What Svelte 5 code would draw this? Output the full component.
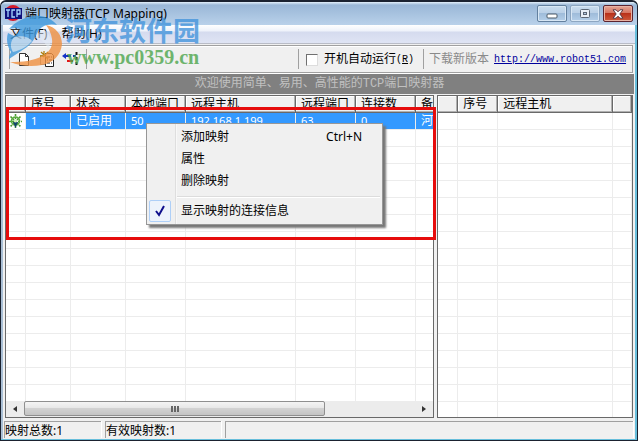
<script>
  const mappings = [
    { id: '1', state: '已启用', local: '50', host: '192.168.1.199', remote: '63', links: '0', note: '河' }
  ];
  const filler = Array.from({ length: 16 });
  const columns = ['序号', '状态', '本地端口', '远程主机', '远程端口', '连接数', '备注'];
</script>

<div class="window">
  <header class="title">
    <svg class="appicon" width="17" height="17" viewBox="0 0 17 17" aria-hidden="true">
      <circle cx="8" cy="8" r="8" fill="#d51b2c" />
      <rect x="0" y="3" width="17" height="11" fill="#10107c" />
      <path d="M1 5h4M3 5v7M10 5H7v7h3M12 12V5h3v4h-3" fill="none" stroke="#a8d8ff" stroke-width="1.3" />
    </svg>
    <h1>端口映射器(TCP Mapping)</h1>
    <div class="controls">
      <button aria-label="最小化"><svg width="12" height="10" viewBox="0 0 12 10"><rect x="1" y="5" width="10" height="4" rx="1" fill="#fff" stroke="#4b5867" /></svg></button>
      <button class="max" aria-label="最大化"><svg width="12" height="10" viewBox="0 0 12 10"><rect x="1.5" y=".5" width="9" height="8" rx="1" fill="#e8eff7" stroke="#5b6675" /><rect x="4.5" y="3.5" width="3" height="2" fill="#b5cce5" stroke="#5b6675" /></svg></button>
      <button class="close" aria-label="关闭"><svg width="14" height="10" viewBox="0 0 14 10"><path d="M2 .8h3l2 2 2-2h3L8.8 5l3.2 4.2H9l-2-2-2 2H2L5.2 5z" fill="#fff" stroke="#5a3a44" /></svg></button>
    </div>
  </header>

  <nav class="menubar">
    <button>文件(F)</button>
    <button>帮助(H)</button>
  </nav>

  <div class="toolbar">
    <div class="tools">
      <button aria-label="新建"><svg width="16" height="16" viewBox="0 0 16 16"><path d="M3.5 2.5h6l3 3v9h-9z" fill="#fff" stroke="#333" /><path d="M9.5 2.5v3h3" fill="none" stroke="#333" /></svg></button>
      <button aria-label="属性"><svg width="16" height="16" viewBox="0 0 16 16"><path d="M1.5 4.5h7v9h-7z" fill="#fff" stroke="#999" /><path d="M6.5 2.5h6l2 2v11h-8z" fill="#fff" stroke="#222" /><path d="M8 6h3m1 0h1M8 9h1m1 0h3M8 12h3m1 0h1" stroke="#222" /><path d="M2 1l7 7M9 1L4 6M5 0v3M1 5h3" stroke="#b08012" stroke-width="1.3" /></svg></button>
      <button aria-label="映射"><svg width="17" height="16" viewBox="0 0 17 16"><path d="M3 5h6M11 5h3" stroke="#1432c8" stroke-width="2" /><path d="M4 2L0 5l4 3z" fill="#1432c8" /><path d="M5 10h6" stroke="#e01717" stroke-width="2" /><path d="M14.5 1v14" stroke="#111" stroke-width="2" stroke-dasharray="3 2" /></svg></button>
    </div>
    <label class="auto"><input type="checkbox" />开机自动运行<span class="key">(<u>R</u>)</span></label>
    <div class="download"><span>下载新版本</span><a href="http://www.robot51.com">http://www.robot51.com</a></div>
  </div>

  <div class="banner">欢迎使用简单、易用、高性能的TCP端口映射器</div>

  <main>
    <section class="panel left">
      <div class="view">
        <table>
          <colgroup><col class="w20" /><col class="w45" /><col class="w55" /><col class="w60" /><col class="w110" /><col class="w60" /><col class="w60" /><col class="w60" /></colgroup>
          <thead><tr><th></th>{#each columns as c}<th>{c}</th>{/each}</tr></thead>
          <tbody>
            {#each mappings as m}
              <tr class="selected">
                <td class="status"><svg width="15" height="15" viewBox="0 0 15 15" aria-hidden="true"><path d="M7.5 0v15M1 7.5h13M2.5 2.5l10 10M12.5 2.5l-10 10" stroke="#4c9a35" stroke-width="1.6" stroke-dasharray="2 1" /><circle cx="7.5" cy="7" r="4" fill="none" stroke="#58ac3e" stroke-width="1.6" /><path d="M5 8h5l-2.500 6z" fill="#12456a" /><circle cx="7.5" cy="7" r="1.5" fill="#d6efbd" /></svg></td>
                <td>{m.id}</td><td class="song">{m.state}</td><td>{m.local}</td><td>{m.host}</td><td>{m.remote}</td><td>{m.links}</td><td class="song">{m.note}</td>
              </tr>
            {/each}
            {#each filler as _}
              <tr><td></td><td></td><td></td><td></td><td></td><td></td><td></td><td></td></tr>
            {/each}
          </tbody>
        </table>
      </div>
      <div class="scroll">
        <button aria-label="向左滚动"><svg width="4" height="6" viewBox="0 0 4 6"><path d="M4 0v6L0 3z" fill="#333" /></svg></button>
        <div class="track"><div class="thumb"><i></i><i></i><i></i></div></div>
        <button aria-label="向右滚动"><svg width="4" height="6" viewBox="0 0 4 6"><path d="M0 0v6l4-3z" fill="#333" /></svg></button>
      </div>
      <div class="frame"></div>
    </section>
    <section class="panel right">
      <div class="view">
        <table class="fluid">
          <colgroup><col class="w20" /><col class="w40" /><col class="w115" /><col /></colgroup>
          <thead><tr><th></th><th>序号</th><th>远程主机</th><th></th></tr></thead>
          <tbody>
            <tr><td></td><td></td><td></td><td></td></tr>
            {#each filler as _}
              <tr><td></td><td></td><td></td><td></td></tr>
            {/each}
            <tr><td></td><td></td><td></td><td></td></tr>
          </tbody>
        </table>
      </div>
    </section>
  </main>

  <footer>
    <span class="total">映射总数:1</span>
    <span class="active">有效映射数:1</span>
    <span class="rest"></span>
  </footer>

  <div class="context" role="menu">
    <button role="menuitem"><span></span>添加映射<kbd>Ctrl+N</kbd></button>
    <button role="menuitem"><span></span>属性</button>
    <button role="menuitem"><span></span>删除映射</button>
    <hr />
    <button role="menuitemcheckbox" aria-checked="true"><span class="check"><svg width="10" height="12" viewBox="0 0 10 12"><path d="M1 6l3 4L9 1" fill="none" stroke="#10108c" stroke-width="2" /></svg></span>显示映射的连接信息</button>
  </div>

  <div class="watermark">
    <svg width="56" height="52" viewBox="0 0 56 52" aria-hidden="true">
      <path d="M3 14C10 6 19 2 29 1c9-1 17 3 22 9-7-2-14 0-18 5-4 6-5 12-12 17L3 44c0-3 1-5 2-7C1 31 0 24 2 18l6 3c3-2 5-4 6-7-4-1-7-1-11 0z" fill="#3d98dc" />
      <path d="M40 10c10 2 16 10 16 19-1 11-9 19-20 21-11 2-22 1-32-3 12 0 24-1 32-6 8-4 11-10 10-17-1-6-3-10-6-14z" fill="#ef9040" />
      <path d="M8 22c8-2 15 0 18 4-5 6-11 9-19 11-3-5-3-10 1-15z" fill="#dfe9f2" fill-opacity=".7" />
      <path d="M29 23c3-6 7-8 11-7 5 5 6 12 2 18-2-6-6-10-13-11z" fill="#e4edf5" fill-opacity=".7" />
    </svg>
    <div class="brand"><strong>河东软件园</strong><b>www.pc0359.cn</b></div>
  </div>
</div>

<style>
  :global(body) { margin: 0; }
  .window {
    position: relative; box-sizing: border-box; min-height: 100vh; display: flex; flex-direction: column;
    padding: 0 4px 2px; background: #f0f0f0; border: solid #1b2230; border-width: 2px 1px 1px;
    border-radius: 6px 6px 0 0; box-shadow: inset -2px -1px #67bedb, inset 2px 0 #a9bfd5;
    font: 12px/16px "Noto Sans", "Noto Sans CJK SC", sans-serif; color: #000; overflow: hidden;
  }
  button { font: inherit; color: inherit; border: 0; padding: 0; background: none; display: flex; align-items: center; justify-content: center; }
  .title { height: 23px; flex: none; margin: 0 -4px; padding: 0 4px; display: flex; background: linear-gradient(#e4f0fb, #9ab7d7 3px, #b9d1ea); border-radius: 5px 5px 0 0; }
  .appicon { margin-top: 3px; }
  h1 { flex: 1; margin: 3px 0 0 3px; font-size: 12px; font-weight: 400; line-height: 18px; }
  .controls { display: flex; gap: 3px; margin-top: 3px; }
  .controls button { box-sizing: border-box; width: 30px; height: 17px; border: 1px solid #63809f; border-radius: 2px; background: linear-gradient(#c9dcef, #b9cfe6 50%, #9fbcda 50%, #b4cfe9); box-shadow: inset 0 0 0 1px #d8e7f5; }
  .controls .max { border-color: #8da6c1; }
  .controls .close { border-color: #5c2430; background: linear-gradient(#e6a596, #d4705c 50%, #b9311a 50%, #cf5a3c); box-shadow: inset 0 0 0 1px #e9b3a5; }
  .menubar { height: 18px; flex: none; margin: 0 -2px; display: flex; gap: 14px; padding-left: 7px; background: linear-gradient(#fff, #eef2fa 6px, #d5dbee 7px, #dfe4f4); border-bottom: 1px solid #b9bcc6; }
  .toolbar { box-sizing: border-box; height: 28px; flex: none; margin-top: 1px; display: flex; align-items: center; border: 1px solid #a0a0a0; border-width: 1px 1px 1px 0; box-shadow: inset 0 1px #fff, 0 1px #fff; font-family: "Liberation Mono", "Noto Sans CJK SC", monospace; }
  .tools { flex: 1; height: 20px; display: flex; align-items: center; gap: 7px; margin-left: 4px; padding-left: 6px; border-left: 1px solid #a0a0a0; }
  .tools::after { content: ""; height: 20px; border-left: 1px solid #a0a0a0; }
  .auto, .download { box-sizing: border-box; height: 20px; display: flex; align-items: center; border-left: 1px solid #a0a0a0; white-space: nowrap; }
  .auto { width: 125px; padding: 2px 0 0 7px; }
  .auto input { appearance: none; box-sizing: border-box; width: 12px; height: 12px; margin: 0 6px 0 0; background: #fff; border: 1px solid; border-color: #707070 #ddd #ddd #707070; }
  .key { font-size: 10px; }
  .download { width: 209px; gap: 5px; padding: 2px 0 0 5px; color: #8a8a8a; }
  .download a { color: #00009c; font-size: 10px; }
  .banner { height: 20px; flex: none; margin: 1px -1px 0 0; background: #808080; color: #c0c0c0; line-height: 20px; text-align: center; font-family: "Liberation Mono", "Noto Sans CJK SC", monospace; }
  main { flex: 1; display: flex; gap: 3px; min-height: 0; margin-top: 1px; }
  .panel { position: relative; box-sizing: border-box; min-width: 0; display: flex; flex-direction: column; border: 1px solid #696969; background: #fff; }
  .left { flex: 430 1 0; }
  .right { flex: 195 1 0; }
  .view { flex: 1 1 0; min-height: 240px; overflow: hidden; }
  table { table-layout: fixed; width: 470px; border-collapse: separate; border-spacing: 0; }
  .fluid { width: 100%; }
  .w20 { width: 20px; } .w40 { width: 40px; } .w45 { width: 45px; } .w55 { width: 55px; } .w60 { width: 60px; } .w110 { width: 110px; } .w115 { width: 115px; }
  th, td { box-sizing: border-box; height: 17px; padding: 0 0 0 5px; line-height: 16px; font-weight: 400; text-align: left; white-space: nowrap; overflow: hidden; }
  th { background: #f0f0f0; border-right: 1px solid #696969; border-bottom: 1px solid #696969; box-shadow: inset -1px -1px #b0b0b0, inset 1px 1px #fff; }
  td { border-right: 1px solid #ececec; border-bottom: 1px solid #ececec; }
  .selected td { background: #3399ff; color: #fff; font-size: 11px; }
  .selected .song { font-size: 12px; }
  .selected .status { background: #fff; padding: 0 0 0 2px; }
  .status svg { display: block; }
  .scroll { height: 16px; flex: none; display: flex; background: #ececec; }
  .scroll button { width: 18px; }
  .track { flex: 1; display: flex; }
  .thumb { box-sizing: border-box; width: 77%; height: 15px; display: flex; align-items: center; justify-content: center; gap: 1px; border: 1px solid #8f8f8f; border-radius: 2px; background: linear-gradient(#f4f4f4, #e6e6e6 50%, #d2d2d2 50%, #c4c4c4); }
  .thumb i { width: 2px; height: 6px; background: #666; }
  .frame { position: absolute; left: 0; right: -3px; top: 11px; height: 127px; border: 3px solid #e60c0c; pointer-events: none; }
  footer { height: 17px; flex: none; display: flex; gap: 4px; margin-top: 3px; line-height: 17px; }
  footer span { box-sizing: border-box; border: solid #a0a0a0; border-width: 1px 0 0 1px; box-shadow: 1px 0 #fff; }
  .total { width: 97px; margin-left: -1px; }
  .active { width: 116px; }
  .rest { flex: 1; }
  .context { position: absolute; left: 145px; top: 121px; box-sizing: border-box; width: 237px; padding: 2px; background: linear-gradient(90deg, #f0f0f0 28px, #dedede 28px, #dedede 29px, #fff 29px, #f0f0f0 30px); border: 1px solid #979797; box-shadow: 3px 3px 2px #777; }
  .context button { width: 100%; height: 22px; justify-content: flex-start; }
  .context span { box-sizing: border-box; width: 22px; height: 22px; margin-right: 10px; display: grid; place-items: center; }
  .context .check { border: 1px solid #aecff7; border-radius: 2px; background: #edf3fb; }
  .context kbd { margin-left: auto; padding-right: 18px; font: inherit; }
  .context hr { margin: 4px 0 2px 28px; border: 0; border-top: 1px solid #dcdcdc; border-bottom: 1px solid #fff; }
  .watermark { position: absolute; left: 5px; top: 13px; display: flex; opacity: .8; pointer-events: none; }
  .brand { display: flex; flex-direction: column; padding: 1px 0 0 3px; white-space: nowrap; }
  .brand strong { color: #4595dc; font: 700 27px/28px "Noto Sans CJK SC", sans-serif; }
  .brand b { padding-left: 2px; color: #4da64d; font: 700 20px/26px "Liberation Serif", serif; }
</style>
